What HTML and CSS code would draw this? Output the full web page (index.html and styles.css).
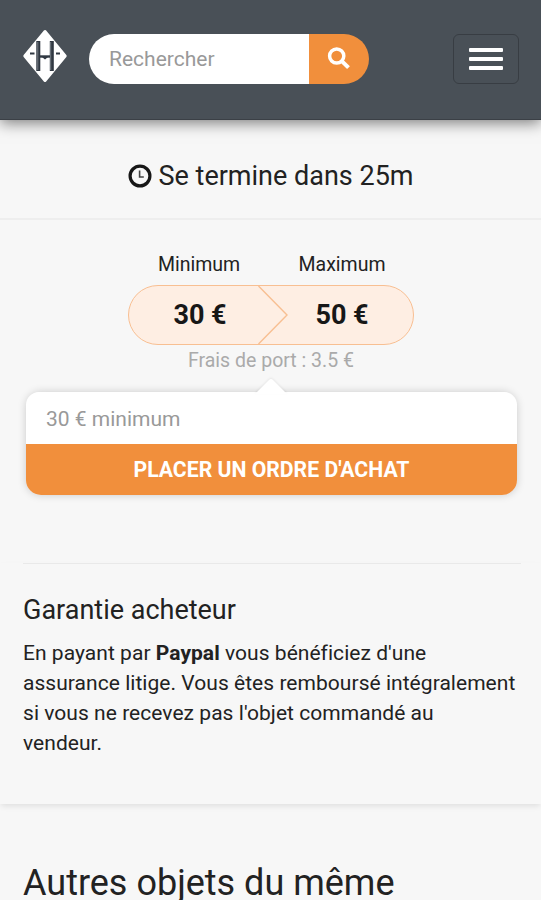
FILE: index.html
```html
<!DOCTYPE html>
<html lang="fr">
<head>
<meta charset="utf-8">
<meta name="viewport" content="width=device-width, initial-scale=1">
<title>Placer un ordre d'achat</title>
<link rel="stylesheet" href="styles.css">
</head>
<body>
<header class="navbar">
  <svg class="logo" viewBox="0 0 46 56" aria-hidden="true">
    <path d="M23 3.5 L43.2 28 L23 52.5 L2.8 28 Z" fill="#fff" stroke="#fff" stroke-width="3" stroke-linejoin="round"/>
    <g fill="none" stroke="#303842">
      <path d="M16.3 13V43M29.8 13V43" stroke-width="4"/>
      <path d="M18 28.5H28" stroke-width="2.4"/>
      <path d="M8 25.5H12.5M34 25.5H38" stroke-width="2"/>
    </g>
    <path d="M20 29H26L23 31.5Z" fill="#303842"/>
    <path d="M15.8 14V42M28.7 14V42" stroke="#a9b0b7" stroke-width=".6"/>
  </svg>
  <form class="search">
    <input class="search-input" type="text" placeholder="Rechercher" aria-label="Rechercher">
    <button class="search-button" type="button" aria-label="Rechercher">
      <svg class="search-icon" viewBox="0 0 24 24"><circle cx="9.7" cy="9" r="7.1" fill="none" stroke="#fff" stroke-width="3.5"/><path d="M14.8 14.1L21.5 20.7" stroke="#fff" stroke-width="4"/></svg>
    </button>
  </form>
  <button class="menu" type="button" aria-label="Menu"><span class="bar"></span><span class="bar"></span><span class="bar"></span></button>
</header>
<main>
  <section class="countdown">
    <svg class="clock" viewBox="0 0 24 24"><circle cx="12" cy="12" r="9.9" fill="none" stroke="#171717" stroke-width="3.2"/><path d="M11.6 6.5V13H15.8" fill="none" stroke="#444" stroke-width="1.6"/></svg>
    <span class="countdown-text">Se termine dans 25m</span>
  </section>
  <section class="bid">
    <div class="labels"><span>Minimum</span><span>Maximum</span></div>
    <div class="range">
      <svg class="chevron" viewBox="0 0 30 58" aria-hidden="true"><path d="M0.5 0L29 29L0.5 58" fill="none" stroke="#f8bf92" stroke-width="1.4"/></svg>
      <strong class="price">30 €</strong><strong class="price">50 €</strong>
    </div>
    <p class="shipping">Frais de port : 3.5 €</p>
    <form class="order">
      <svg class="arrow" viewBox="0 0 34 17" aria-hidden="true"><path d="M1 17L15 3Q17 1 19 3L33 17" fill="#fff"/></svg>
      <input class="order-input" type="text" placeholder="30 € minimum" aria-label="Montant">
      <button class="order-button" type="button">PLACER UN ORDRE D'ACHAT</button>
    </form>
  </section>
  <section class="guarantee">
    <h2 class="guarantee-title">Garantie acheteur</h2>
    <p class="guarantee-text">En payant par <b>Paypal</b> vous bénéficiez d'une assurance litige. Vous êtes remboursé intégralement si vous ne recevez pas l'objet commandé au<br>vendeur.</p>
  </section>
  <section class="related">
    <h1 class="related-title">Autres objets du même</h1>
  </section>
</main>
</body>
</html>
```
FILE: styles.css
```css
* { box-sizing: border-box; }
html { overflow: hidden; }
body {
  margin: 0;
  height: 900px;
  overflow: hidden;
  background: #f7f7f7;
  color: #222;
  font: 400 21px/30px Roboto, sans-serif;
}
h1, h2, p { margin: 0; font-weight: 400; }
input, button { font: inherit; border: 0; margin: 0; padding: 0; }
.navbar {
  position: relative;
  height: 120px;
  padding: 34px 22px 0;
  display: flex;
  align-items: flex-start;
  background: #495057;
  border-bottom: 1px solid #3b4046;
  box-shadow: 0 3px 14px rgba(0, 0, 0, .5);
}
.logo { width: 46px; height: 56px; margin-top: -6px; flex: none; }
.search {
  display: flex;
  width: 280px;
  height: 50px;
  margin-left: 21px;
  border-radius: 25px;
  overflow: hidden;
}
.search-input { width: 220px; padding-left: 20px; background: #fff; }
input::placeholder { color: #999; opacity: 1; }
.search-button { width: 60px; background: #f18f3c; display: flex; align-items: center; justify-content: center; }
.search-icon { width: 24px; height: 24px; }
.menu {
  width: 66px;
  height: 50px;
  margin-left: auto;
  border: 1.5px solid #383d43;
  border-radius: 6px;
  background: transparent;
  display: flex;
  flex-direction: column;
  align-items: center;
  justify-content: center;
  gap: 5px;
}
.bar { width: 34px; height: 4px; border-radius: 1px; background: #fff; }
.countdown {
  height: 100px;
  padding-top: 13px;
  display: flex;
  align-items: center;
  justify-content: center;
  gap: 7px;
  border-bottom: 2px solid #eee;
}
.clock { width: 24px; height: 24px; }
.countdown-text { font-size: 27px; line-height: 32px; }
.bid { padding: 30px 25px 0; }
.labels { display: grid; grid-template-columns: 143px 143px; justify-content: center; text-align: center; font-size: 19.5px; }
.range {
  position: relative;
  width: 286px;
  height: 60px;
  margin: 5px auto 0;
  display: grid;
  grid-template-columns: 1fr 1fr;
  align-items: center;
  text-align: center;
  border: 1.5px solid #f8bf92;
  border-radius: 30px;
  background: #feeee3;
}
.chevron { position: absolute; left: 129px; top: 0; width: 30px; height: 58px; }
.price { padding-left: 1px; font-size: 27px; font-weight: 700; color: #171717; }
.shipping { padding: 1px 0 0 1px; text-align: center; font-size: 19.5px; color: #aaa; }
.order {
  position: relative;
  margin: 16px 0 0 1px;
  width: 491px;
  height: 103px;
  border-radius: 15px;
  box-shadow: 0 0 8px rgba(0, 0, 0, .18);
}
.arrow { position: absolute; left: 228px; top: -15px; width: 34px; height: 17px; filter: drop-shadow(0 -1px 1px rgba(0, 0, 0, .07)); }
.order-input { display: block; width: 100%; height: 52px; padding: 2px 20px 1px; border-radius: 13px 13px 0 0; background: #fff; }
.order-button { display: block; width: 100%; height: 51px; border-radius: 0 0 15px 15px; background: #f18f3c; color: #fff; font-weight: 700; font-size: 21.2px; }
.guarantee { margin-top: 68px; height: 241px; padding: 0 20px 0 23px; box-shadow: 0 3px 6px -1px rgba(0, 0, 0, .1); }
.guarantee-title { padding-top: 31px; border-top: 1px solid #e9e9e9; font-size: 27px; }
.guarantee-text { margin-top: 13px; letter-spacing: .04px; }
.related { padding: 57px 23px 0; }
.related-title { font-size: 36px; line-height: 44px; white-space: nowrap; }
```
